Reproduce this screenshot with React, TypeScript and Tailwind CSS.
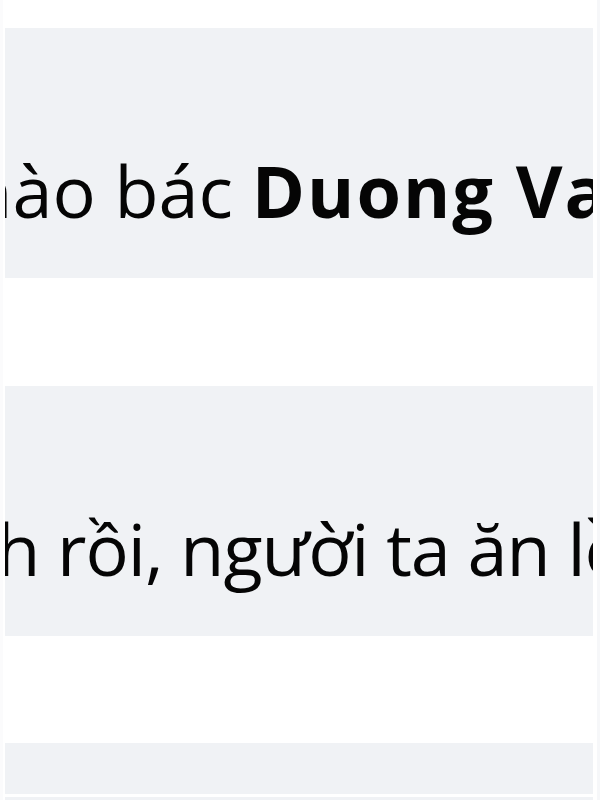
const ROWS = [
  { top: "mt-[28px]", body: <>Chào bác <span className="font-bold tracking-[2px]">Duong Van Minh</span></>, indent: "ml-[-82px]" },
  { top: "mt-[108px]", body: <>đã bán nhanh rồi, người ta ăn lồng đèn</>, indent: "ml-[-420px] tracking-[-1px]" },
];

export default function App() {
  return (
    <div className="w-[600px] h-[800px] overflow-hidden bg-white font-['Open_Sans',sans-serif] text-[#050505]">
      <div className="flex h-full">
        <div className="w-[3px] bg-[#fbfbfc]" />
        <div className="ml-[2px] w-[588px] flex flex-col">
          {ROWS.map((r, i) => (
            <div key={i} className={`${r.top} h-[250px] shrink-0 bg-[#f0f2f5] overflow-hidden`}>
              <p className={`${r.indent} pt-[112px] text-[72px] leading-[100px] whitespace-nowrap`}>{r.body}</p>
            </div>
          ))}
          <div className="mt-[107px] h-[51px] shrink-0 bg-[#f0f2f5]" />
          <div className="mt-[3px] h-[60px] shrink-0 bg-[#f0f2f5]" />
        </div>
        <div className="ml-[4px] w-[3px] bg-[#f6f7f9]" />
      </div>
    </div>
  );
}
